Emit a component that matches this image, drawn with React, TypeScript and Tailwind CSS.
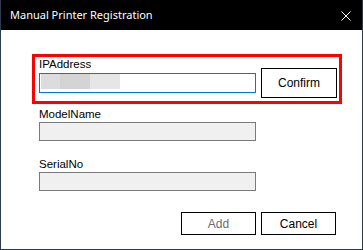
import React from 'react';

const UI_FONT = { fontFamily: '"Liberation Sans", Arial, sans-serif' };

const Field: React.FC<{ label: string; className?: string }> = ({ label, className = '' }) => (
  <div className={className}>
    <div className="h-[14px] text-[11.5px] leading-[14px] text-black">{label}</div>
    <div className="mt-[1px] w-[217px] h-[19px] border border-[#7a7a7a] bg-[#f0f0f0]" />
  </div>
);

export default function App() {
  return (
    <div className="w-[363px] h-[250px] flex flex-col border-x border-b border-[#2b3a4e] bg-white" style={UI_FONT}>
      {/* title bar */}
      <div className="h-[30px] shrink-0 bg-black flex items-center justify-between pl-[9px] pr-[11px]">
        <span className="text-white text-[11px]" style={{ fontFamily: '"Noto Sans", "Open Sans", sans-serif' }}>
          Manual Printer Registration
        </span>
        <svg width="10" height="10" viewBox="0 0 10 10" className="mt-[1px]">
          <path d="M0.5 0.5L9.5 9.5M9.5 0.5L0.5 9.5" stroke="white" strokeWidth="1" />
        </svg>
      </div>

      <div className="flex-1 pl-[31px] pt-[24px]">
        {/* highlighted IP row */}
        <div className="w-[310px] h-[50px] border-[3px] border-[#ff0000] flex items-start">
          <div className="ml-[4px]">
            <div className="h-[14px] text-[11.5px] leading-[14px] text-black">IPAddress</div>
            <div className="mt-[2px] w-[217px] h-[20px] border border-[#0078d7] bg-white flex items-start pl-[1px]">
              <div className="w-[19px] h-[15px] bg-[#dcdcdc]" />
              <div className="w-[30px] h-[15px] bg-[#d4d4d4]" />
              <div className="w-[30px] h-[15px] bg-[#e6e6e6]" />
            </div>
          </div>
          <button className="ml-[5px] mt-[11px] w-[76px] h-[30px] border border-black bg-white text-[12px] text-black">
            Confirm
          </button>
        </div>

        <div className="ml-[7px]">
          <Field label="ModelName" className="mt-[3px]" />
          <Field label="SerialNo" className="mt-[16px]" />
        </div>

        <div className="mt-[21px] flex justify-end gap-[5px] pr-[26px]">
          <button className="w-[75px] h-[23px] border border-black bg-white text-[12px] text-[#6d6d6d]">Add</button>
          <button className="w-[75px] h-[23px] border border-black bg-white text-[12px] text-black">Cancel</button>
        </div>
      </div>
    </div>
  );
}
